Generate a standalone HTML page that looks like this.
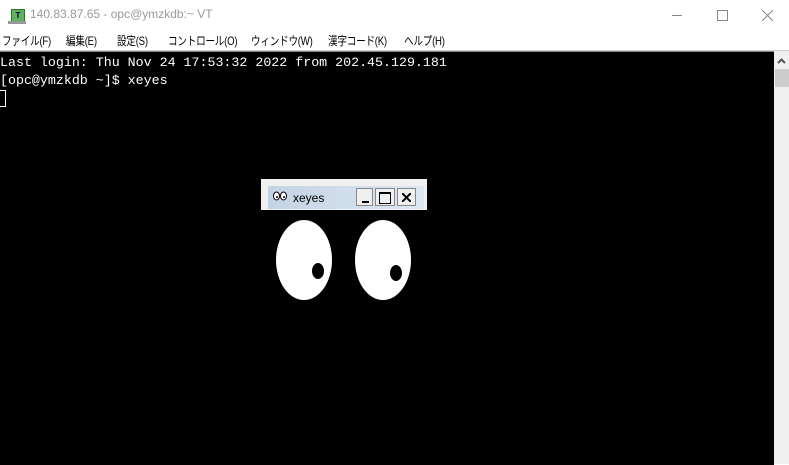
<!DOCTYPE html>
<html><head><style>
body{margin:0;width:789px;height:464px;overflow:hidden;background:#fff;position:relative;font-family:"Liberation Sans","Noto Sans CJK JP",sans-serif}
.abs{position:absolute}
#title{left:0;top:0;width:789px;height:30px;background:#fff}
#menu{left:0;top:30px;width:789px;height:20px;font-size:12px;color:#000}
#menu span{position:absolute;top:2px;white-space:nowrap;transform:scaleX(0.8);transform-origin:left top;letter-spacing:-0.3px}
#term{left:0;top:51px;width:774px;height:413px;background:#000;border-top:1px solid #888}
#term pre{margin:0;position:absolute;left:0;top:2px;font-family:"Liberation Mono",monospace;font-size:13.3px;line-height:18px;color:#fff}
#sb{left:774px;top:51px;width:15px;height:413px;background:#f0f0f0}
</style></head><body>
<div id="title" class="abs">
 <div class="abs" style="left:11px;top:9px;width:12px;height:11px;background:#5fb25f;border:1px solid #2a7a2a;font-size:8px;line-height:11px;text-align:center;color:#003;font-weight:bold">T</div>
 <div class="abs" style="left:8px;top:21px;width:18px;height:3px;background:#999"></div>
 <div class="abs" style="left:30px;top:7px;font-size:12px;color:#999">140.83.87.65 - opc@ymzkdb:~ VT</div>
 <div class="abs" style="left:672px;top:15px;width:10px;height:1px;background:#888"></div>
 <div class="abs" style="left:717px;top:10px;width:9px;height:9px;border:1px solid #888"></div>
 <svg class="abs" style="left:762px;top:10px" width="11" height="11"><path d="M0 0L11 11M11 0L0 11" stroke="#888" stroke-width="1"/></svg>
</div>
<div id="menu" class="abs">
 <span style="left:2px">ファイル(F)</span><span style="left:66px">編集(E)</span><span style="left:117px">設定(S)</span><span style="left:168px">コントロール(O)</span><span style="left:251px">ウィンドウ(W)</span><span style="left:328px">漢字コード(K)</span><span style="left:404px">ヘルプ(H)</span>
</div>
<div class="abs" style="left:0;top:50px;width:789px;height:1px;background:#ccc"></div>
<div id="term" class="abs">
<pre>Last login: Thu Nov 24 17:53:32 2022 from 202.45.129.181
[opc@ymzkdb ~]$ xeyes
</pre>
 <div class="abs" style="left:0;top:38px;width:5px;height:15px;border:1px solid #fff;border-left:none"></div>
</div>
<div id="sb" class="abs">
 <svg class="abs" style="left:3px;top:7px" width="9" height="6"><path d="M1 5L4.5 1.5L8 5" stroke="#555" stroke-width="2" fill="none"/></svg>
 <div class="abs" style="left:1px;top:18px;width:14px;height:18px;background:#cdcdcd"></div>
</div>
<div class="abs" style="left:261px;top:179px;width:166px;height:31px;background:#f0f0f0"></div>
<div class="abs" style="left:268px;top:186px;width:156px;height:23px;background:linear-gradient(90deg,#c4d3e3,#dde8f3)"></div>
<svg class="abs" style="left:273px;top:191px" width="14" height="10"><ellipse cx="3.5" cy="5" rx="3" ry="4" fill="#fff" stroke="#000"/><ellipse cx="10.5" cy="5" rx="3" ry="4" fill="#fff" stroke="#000"/><circle cx="4" cy="6" r="1" fill="#000"/><circle cx="11" cy="6" r="1" fill="#000"/></svg>
<div class="abs" style="left:293px;top:191px;font-size:12px;color:#000">xeyes</div>
<div class="abs" style="left:356px;top:188px;width:17px;height:18px;background:#f0f0f0;border:1px solid #888;box-sizing:border-box"><div class="abs" style="left:5px;top:12px;width:7px;height:2px;background:#000"></div></div>
<div class="abs" style="left:375px;top:188px;width:20px;height:18px;background:#f0f0f0;border:1px solid #888;box-sizing:border-box"><div class="abs" style="left:3px;top:3px;width:10px;height:9px;border:1px solid #000;border-top-width:2px"></div></div>
<div class="abs" style="left:397px;top:188px;width:19px;height:18px;background:#f0f0f0;border:1px solid #888;box-sizing:border-box"><svg class="abs" style="left:4px;top:4px" width="9" height="9"><path d="M0 0L9 9M9 0L0 9" stroke="#000" stroke-width="2"/></svg></div>
<svg class="abs" style="left:0;top:0" width="789" height="464">
 <ellipse cx="304" cy="260" rx="28" ry="40" fill="#fff"/>
 <ellipse cx="383" cy="260" rx="28" ry="40" fill="#fff"/>
 <ellipse cx="318" cy="271" rx="6" ry="8" fill="#000"/>
 <ellipse cx="396" cy="273" rx="6" ry="8" fill="#000"/>
</svg>
</body></html>
